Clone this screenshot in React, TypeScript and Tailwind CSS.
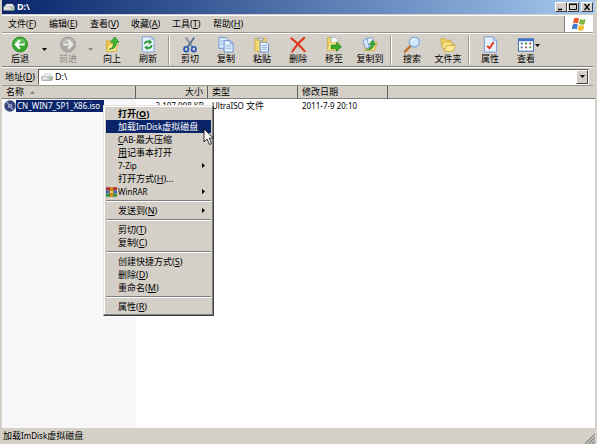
import React from 'react';

type MenuEntry = {
  label: string;
  hotkey?: string;
  suffix?: string;
  bold?: boolean;
  active?: boolean;
  submenu?: boolean;
  underlineFirst?: boolean;
  icon?: React.ReactNode;
};

const menus = [
  { label: '文件', hotkey: 'F' },
  { label: '编辑', hotkey: 'E' },
  { label: '查看', hotkey: 'V' },
  { label: '收藏', hotkey: 'A' },
  { label: '工具', hotkey: 'T' },
  { label: '帮助', hotkey: 'H' },
];

function Hotkey({ letter }: { letter: string }) {
  return (
    <>
      (<u>{letter}</u>)
    </>
  );
}

// Latin runs are set one size smaller than the Chinese around them
function Mixed({ text }: { text: string }) {
  return (
    <>
      {text.split(/([\x20-\x7e]+)/).map((part, i) =>
        i % 2 ? (
          <span key={i} className="text-[8px]">
            {part}
          </span>
        ) : (
          part
        )
      )}
    </>
  );
}

function Svg({ children }: { children: React.ReactNode }) {
  return (
    <svg className="w-[18px] h-[18px]" viewBox="0 0 18 18" fill="none" aria-hidden="true">
      {children}
    </svg>
  );
}

function DriveIcon() {
  return (
    <svg className="w-3 h-2 shrink-0" viewBox="0 0 12 8" aria-hidden="true">
      <path d="M1 4 3.500 1h6L11.500 4z" fill="#f4f4f2" stroke="#a5a5a0" strokeWidth=".5" />
      <path d="M.5 4h11v2.500q0 1-1 1h-9q-1 0-1-1z" fill="#d2d3d0" stroke="#8d8d88" strokeWidth=".6" />
      <path d="M1.500 5h5" stroke="#fff" />
      <path d="M8.500 6h2" stroke="#3fae3a" />
    </svg>
  );
}

function DiscIcon() {
  return (
    <svg className="w-3 h-3 shrink-0" viewBox="0 0 12 12" aria-hidden="true">
      <circle cx="6" cy="6" r="5.700" fill="#39437c" />
      <path d="M6 6 1.500 2.500a5.600 5.600 0 0 1 2-1.500zM6 6l4.500 3.500a5.600 5.600 0 0 1-2 1.500z" fill="#7d88ba" />
      <circle cx="6" cy="6" r="2" fill="#b9c1e2" />
      <circle cx="6" cy="6" r=".8" fill="#27305f" />
    </svg>
  );
}

function RarIcon() {
  return (
    <svg className="w-[11px] h-2.5" viewBox="0 0 11 10" aria-hidden="true">
      <rect width="11" height="3" y=".2" fill="#b3312d" />
      <rect width="11" height="3" y="3.500" fill="#3862ae" />
      <rect width="11" height="3" y="6.800" fill="#3b9440" />
      <rect x="4" width="3" height="10" fill="#d98a25" />
      <rect x="3.500" y="3.500" width="4" height="3" fill="#f7d873" stroke="#8a5a12" strokeWidth=".6" />
    </svg>
  );
}

function RoundArrow({ back }: { back?: boolean }) {
  return (
    <Svg>
      <circle cx="9" cy="9" r="8" fill={back ? '#35a82c' : '#a9a8a4'} stroke={back ? '#24831f' : '#989793'} strokeWidth=".8" />
      <path d="M2.500 8a6.600 6.600 0 0 1 13 0q-6-3-13 0z" fill="#fff" opacity=".25" />
      {back ? (
        <path d="M14 9H5M9 4.500 4.500 9 9 13.500" stroke="#fff" strokeWidth="2.300" />
      ) : (
        <path d="M4 9h9M9 4.500 13.500 9 9 13.500" stroke="#eeece8" strokeWidth="2.300" />
      )}
    </Svg>
  );
}

function UpIcon() {
  return (
    <Svg>
      <path d="M3 5h4l1.500 1.500H13V16L3 16.500z" fill="#eec94c" stroke="#c79c28" strokeWidth=".7" />
      <path d="M3 16.500 6 8.500h9.500L13 16z" fill="#fbe68d" stroke="#d0a835" strokeWidth=".6" />
      <path d="M6 14q5-1 4.500-7.500H7.500L12 1l4.500 5.500h-2.800Q14 14 6 14z" fill="#3fb636" stroke="#217c1d" strokeWidth=".7" />
    </Svg>
  );
}

function RefreshIcon() {
  return (
    <Svg>
      <path d="M3 1h10l2.500 2.500V17H3z" fill="#e9f2fd" stroke="#6e9ad6" strokeWidth=".9" />
      <path d="M13 1v2.500h2.500" stroke="#6e9ad6" strokeWidth=".7" />
      <path d="M5.500 8.500Q6.500 5 10.500 6M13 9.500Q12 13.500 8 12.500" stroke="#2b9e34" strokeWidth="1.900" />
      <path d="M10 3.500 13.500 6.500 9.500 9zM8.500 10 5 12l3.500 3z" fill="#2b9e34" />
    </Svg>
  );
}

function CutIcon() {
  return (
    <Svg>
      <path d="M4.500 1.500 11.500 11.500" stroke="#7d8ea8" strokeWidth="1.900" />
      <path d="M13.500 1.500 6.500 11.500" stroke="#5c7090" strokeWidth="1.900" />
      <ellipse cx="5" cy="14" rx="2.300" ry="2.600" stroke="#2857b3" strokeWidth="1.800" />
      <ellipse cx="13" cy="14" rx="2.300" ry="2.600" stroke="#2857b3" strokeWidth="1.800" />
    </Svg>
  );
}

function CopyIcon() {
  return (
    <Svg>
      <path d="M1.500 1.500h7L11 4v9H1.500z" fill="#dce9fb" stroke="#5d8fd6" strokeWidth=".9" />
      <path d="M3 5h5M3 7h3M3 9h3" stroke="#8bb0e4" strokeWidth=".8" />
      <path d="M7 5h6.500L16.500 8v9H7z" fill="#eef5fe" stroke="#4b80cc" strokeWidth=".9" />
      <path d="M13.500 5v3h3" stroke="#4b80cc" strokeWidth=".7" />
      <path d="M8.500 9.500H15M8.500 11.500H15M8.500 13.500H15" stroke="#7ba4df" strokeWidth=".8" />
    </Svg>
  );
}

function PasteIcon() {
  return (
    <Svg>
      <rect x="1.500" y="2.500" width="12" height="14" rx="1" fill="#f3d971" stroke="#c9a23c" strokeWidth=".8" />
      <path d="M4.500 4.500V2.500h1.500Q7.500-.5 9 2.500h1.500v2z" fill="#d7d9dc" stroke="#84888f" strokeWidth=".7" />
      <path d="M7 6.500h6l3 3V17H7z" fill="#eef5fe" stroke="#4b80cc" strokeWidth=".9" />
      <path d="M8.500 10H14M8.500 12H14.500M8.500 14H14.500" stroke="#7ba4df" strokeWidth=".9" />
    </Svg>
  );
}

function DeleteIcon() {
  return (
    <Svg>
      <path d="M2 2.500Q8 7 16 16M15.500 2Q8 8 3 16.500" stroke="#e0361c" strokeWidth="2.200" strokeLinecap="round" />
    </Svg>
  );
}

function MoveIcon() {
  return (
    <Svg>
      <path d="M2 4V2h4.500L8 4h5v11H2z" fill="#f3d465" stroke="#c59d30" strokeWidth=".7" />
      <path d="M6 1.500h5l2 2V10H6z" fill="#f1f6fd" stroke="#87a9d8" strokeWidth=".6" />
      <path d="M2 15 4 7h11l-2 8z" fill="#fbe78f" stroke="#cda838" strokeWidth=".6" />
      <path d="M6 9.500h5.500V6.500L17 11.500l-5.500 5v-3H6z" fill="#36aa2d" stroke="#1e7a1b" strokeWidth=".7" />
    </Svg>
  );
}

function CopyToIcon() {
  return (
    <Svg>
      <path d="M4 6h12.500L14 15.500H3z" fill="#f7dc74" stroke="#c9a236" strokeWidth=".7" />
      <path d="M1.500 5 7 2l3 9-5.500 2.500z" fill="#d6e6fb" stroke="#5f90d2" strokeWidth=".8" />
      <path d="M6 3 11.500 1.500 14 9.500 8 12z" fill="#edf4fe" stroke="#5f90d2" strokeWidth=".8" />
      <path d="M5 14q5 0 5-5H8l3.500-4.500L15 9h-2q-1 7-8 5z" fill="#36a840" stroke="#1e7a2b" strokeWidth=".6" />
    </Svg>
  );
}

function SearchIcon() {
  return (
    <Svg>
      <path d="M7.500 10.500 1.500 16.500" stroke="#c4732f" strokeWidth="2.600" strokeLinecap="round" />
      <circle cx="11.500" cy="6.500" r="5.300" fill="#cfe7fb" stroke="#7fa6d4" strokeWidth="1.200" />
      <path d="M8.500 5.500q1-2.500 3.500-2.500" stroke="#fff" strokeWidth="1.400" />
    </Svg>
  );
}

function FoldersIcon() {
  return (
    <Svg>
      <path d="M1.500 4V3h4.500l1.500 1.500H12V12L3 13z" fill="#f2d160" stroke="#c39b2e" strokeWidth=".7" />
      <path d="M5 7h4L10.500 8.500H15V16H5z" fill="#edc850" stroke="#c39b2e" strokeWidth=".7" />
      <path d="M3 13 4 6.500h9l-1 6.500z" fill="#fae587" stroke="#cba636" strokeWidth=".5" />
      <path d="M5 16.300 7.500 10h9.500l-2.500 6.300z" fill="#fbe996" stroke="#c9a236" strokeWidth=".7" />
    </Svg>
  );
}

function PropertiesIcon() {
  return (
    <Svg>
      <path d="M3 1h9.500L16 4.500V17H3z" fill="#e7f1fd" stroke="#6a95d4" strokeWidth=".9" />
      <path d="M12.500 1v3.500H16" fill="#bcd5f5" stroke="#6a95d4" strokeWidth=".7" />
      <path d="M6 10.500 8.500 13 13 6.500" stroke="#e0391f" strokeWidth="2" />
    </Svg>
  );
}

function ViewIcon() {
  return (
    <Svg>
      <rect x="1" y="3" width="16" height="13" fill="#fff" stroke="#3567b8" />
      <rect x="1" y="3" width="16" height="2.500" fill="#3a72cc" />
      <path d="M3.500 8h2M3.500 12h2" stroke="#3f6fc0" strokeWidth="2" />
      <path d="M8 8h2M12.500 12h2" stroke="#3d9a45" strokeWidth="2" />
      <path d="M12.500 8h2M8 12h2" stroke="#a8486c" strokeWidth="2" />
    </Svg>
  );
}

function WindowsFlag() {
  return (
    <svg className="w-4 h-3.5" viewBox="0 0 16 14" aria-hidden="true">
      <path d="M3 1.500Q5.500 0 8 1.500L7 6.500Q4.500 5 2 6.500z" fill="#e8592b" />
      <path d="M9 2q2.500 1.500 5.500 0l-1 5Q11 8.500 8 7z" fill="#7cb53a" />
      <path d="M1.800 7.500Q4.300 6 6.800 7.500l-1 5Q3.300 11 .8 12.500z" fill="#3d7bd0" />
      <path d="M7.800 8q2.700 1.500 5.500 0l-1 5q-2.800 1.500-5.500 0z" fill="#f3bb2e" />
    </svg>
  );
}

function Caret({ className = 'text-black' }: { className?: string }) {
  return (
    <svg className={`w-[5px] h-[3px] ${className}`} viewBox="0 0 5 3" aria-hidden="true">
      <path d="M0 0h5L2.500 3z" fill="currentColor" />
    </svg>
  );
}

function ToolButton({ label, icon, disabled, caret }: { label: string; icon: React.ReactNode; disabled?: boolean; caret?: boolean }) {
  return (
    <button
      disabled={disabled}
      className={`relative w-9 shrink-0 flex flex-col items-center whitespace-nowrap ${disabled ? 'text-[#8d8a84]' : ''}`}
    >
      {icon}
      <span className="leading-3">{label}</span>
      {caret && (
        <span className="absolute right-1 top-2 flex">
          <Caret />
        </span>
      )}
    </button>
  );
}

function ToolSeparator() {
  return (
    <div className="w-1.5 shrink-0 flex justify-center">
      <div className="w-0.5 border-l border-[#9b978f] border-r border-r-white" />
    </div>
  );
}

function CaptionButton({ label, children }: { label: string; children: React.ReactNode }) {
  return (
    <button
      aria-label={label}
      className="w-3 h-2.5 bg-[#d4d0c8] border border-t-white border-l-white border-r-[#404040] border-b-[#404040] flex items-center justify-center"
    >
      <svg className="w-2 h-2" viewBox="0 0 8 8" fill="none" stroke="#000" aria-hidden="true">
        {children}
      </svg>
    </button>
  );
}

function TitleBar() {
  return (
    <header className="h-3.5 shrink-0 flex items-center pl-px pr-0.5 bg-linear-to-r from-[#0a246a] to-[#a6caf0] text-white">
      <DriveIcon />
      <h1 className="flex-1 pl-0.5 font-bold">D:\</h1>
      <CaptionButton label="最小化">
        <path d="M1 6.500h4" strokeWidth="1.500" />
      </CaptionButton>
      <CaptionButton label="最大化">
        <path d="M.5 1.500h7v5h-7z" />
        <path d="M0 1h8" />
      </CaptionButton>
      <div className="w-0.5" />
      <CaptionButton label="关闭">
        <path d="m1.500 1 5 6M6.500 1l-5 6" strokeWidth="1.300" />
      </CaptionButton>
    </header>
  );
}

function MenuBar() {
  return (
    <nav className="h-[18px] mt-px mr-0.5 shrink-0 flex border-t border-t-white border-b border-b-[#9b978f] pl-1.5">
      {menus.map((m) => (
        <button key={m.label} className="w-[41px] text-left whitespace-nowrap">
          {m.label}
          <Hotkey letter={m.hotkey} />
        </button>
      ))}
      <div className="ml-auto w-[29px] bg-white border-l border-[#808080] flex items-center justify-center">
        <WindowsFlag />
      </div>
    </nav>
  );
}

function ToolBar() {
  return (
    <div className="h-[34px] mr-0.5 shrink-0 flex border-t border-t-white border-b border-b-[#808080] pt-0.5 pb-px">
      <ToolButton label="后退" icon={<RoundArrow back />} />
      <button aria-label="后退记录" className="w-3 shrink-0 flex justify-center pt-3">
        <Caret />
      </button>
      <ToolButton label="前进" icon={<RoundArrow />} disabled />
      <button aria-label="前进记录" className="w-2 shrink-0 flex justify-center pt-3" disabled>
        <Caret className="text-[#8d8a84]" />
      </button>
      <ToolButton label="向上" icon={<UpIcon />} />
      <ToolButton label="刷新" icon={<RefreshIcon />} />
      <ToolSeparator />
      <ToolButton label="剪切" icon={<CutIcon />} />
      <ToolButton label="复制" icon={<CopyIcon />} />
      <ToolButton label="粘贴" icon={<PasteIcon />} />
      <ToolButton label="删除" icon={<DeleteIcon />} />
      <ToolButton label="移至" icon={<MoveIcon />} />
      <ToolButton label="复制到" icon={<CopyToIcon />} />
      <ToolSeparator />
      <ToolButton label="搜索" icon={<SearchIcon />} />
      <ToolButton label="文件夹" icon={<FoldersIcon />} />
      <ToolSeparator />
      <ToolButton label="属性" icon={<PropertiesIcon />} />
      <ToolButton label="查看" icon={<ViewIcon />} caret />
    </div>
  );
}

function AddressBar() {
  return (
    <div className="h-[19px] mr-0.5 shrink-0 flex items-center border-t border-t-white border-b border-b-[#9b978f] pl-[3px] pr-1">
      <label htmlFor="address" className="w-[33px] whitespace-nowrap">
        地址
        <Hotkey letter="D" />
      </label>
      <div className="flex-1 h-4 flex items-center bg-white border border-t-[#606060] border-l-[#606060] border-r-white border-b-white pl-0.5">
        <DriveIcon />
        <input id="address" defaultValue="D:\" className="flex-1 min-w-0 pl-0.5 outline-none" />
        <button
          aria-label="展开地址列表"
          className="w-3 h-full bg-[#d4d0c8] border border-t-white border-l-white border-r-[#404040] border-b-[#404040] flex items-center justify-center"
        >
          <Caret />
        </button>
      </div>
    </div>
  );
}

const thClass = 'h-3 p-0 px-1 font-normal bg-[#d4d0c8] border-r border-[#606060] border-b border-b-[#808080]';

function FileList() {
  return (
    <main className="flex-1 min-h-0 bg-white">
      <table className="w-full h-full table-fixed border-separate border-spacing-0">
        <colgroup>
          <col className="w-[134px]" />
          <col className="w-[72px]" />
          <col className="w-[90px]" />
          <col className="w-[90px]" />
          <col />
        </colgroup>
        <thead>
          <tr>
            <th className={`${thClass} text-left`}>
              <div className="flex items-center gap-1.5">
                名称
                <svg className="w-[5px] h-[3px]" viewBox="0 0 5 3" aria-hidden="true">
                  <path d="M0 3h5L2.500 0z" fill="#87837b" />
                </svg>
              </div>
            </th>
            <th className={`${thClass} text-right`}>大小</th>
            <th className={`${thClass} text-left`}>类型</th>
            <th className={`${thClass} text-left`}>修改日期</th>
            <td className="p-0 bg-[#d4d0c8] border-b border-[#808080]" />
          </tr>
        </thead>
        <tbody>
          <tr className="h-3.5">
            <td className="p-0 bg-[#f7f7f7]">
              <div className="flex items-center pl-0.5">
                <DiscIcon />
                <span className="bg-[#0a246a] text-white text-[8px] leading-3 pl-px pr-1">CN_WIN7_SP1_X86.iso</span>
              </div>
            </td>
            <td className="p-0 pr-1 text-right text-[8px] whitespace-nowrap">3,107,008 KB</td>
            <td className="p-0 pl-1 whitespace-nowrap">
              <Mixed text="UltraISO 文件" />
            </td>
            <td className="p-0 pl-1 text-[8px] whitespace-nowrap">2011-7-9 20:10</td>
            <td />
          </tr>
          <tr>
            <td className="bg-[#f7f7f7]" />
            <td colSpan={4} />
          </tr>
        </tbody>
      </table>
    </main>
  );
}

const contextGroups: MenuEntry[][] = [
  [
    { label: '打开', hotkey: 'O', bold: true },
    { label: '加载ImDisk虚拟磁盘', active: true },
    { label: 'CAB-最大压缩', underlineFirst: true },
    { label: '用记事本打开', underlineFirst: true },
    { label: '7-Zip', submenu: true },
    { label: '打开方式', hotkey: 'H', suffix: '...' },
    { label: 'WinRAR', submenu: true, icon: <RarIcon /> },
  ],
  [{ label: '发送到', hotkey: 'N', submenu: true }],
  [
    { label: '剪切', hotkey: 'T' },
    { label: '复制', hotkey: 'C' },
  ],
  [
    { label: '创建快捷方式', hotkey: 'S' },
    { label: '删除', hotkey: 'D' },
    { label: '重命名', hotkey: 'M' },
  ],
  [{ label: '属性', hotkey: 'R' }],
];

function ContextItem({ item }: { item: MenuEntry }) {
  return (
    <button
      role="menuitem"
      className={`w-full h-[13px] flex items-center pr-1.5 whitespace-nowrap ${item.bold ? 'font-bold' : ''} ${item.active ? 'bg-[#0a246a] text-white' : ''}`}
    >
      <span className="w-3 shrink-0">{item.icon}</span>
      <span className="flex-1 text-left">
        {item.underlineFirst ? (
          <>
            <u>
              <Mixed text={item.label[0]} />
            </u>
            <Mixed text={item.label.slice(1)} />
          </>
        ) : (
          <Mixed text={item.label} />
        )}
        {item.hotkey && <Hotkey letter={item.hotkey} />}
        {item.suffix}
      </span>
      {item.submenu && (
        <svg className="w-[3px] h-[5px]" viewBox="0 0 3 5" aria-hidden="true">
          <path d="M0 0v5l3-2.500z" fill="#000" />
        </svg>
      )}
    </button>
  );
}

function ContextMenu() {
  return (
    <div
      role="menu"
      className="absolute left-[101px] top-[105px] w-[111px] bg-[#d4d0c8] border border-t-[#e6e3dd] border-l-[#e6e3dd] border-r-[#404040] border-b-[#404040] shadow-[inset_-1px_-1px_0_#808080,inset_1px_1px_0_#fff] px-0.5 pt-px pb-0.5"
    >
      {contextGroups.map((group, i) => (
        <React.Fragment key={i}>
          {i > 0 && (
            <div className="h-1.5 flex flex-col justify-center">
              <div className="border-t border-t-[#808080] border-b border-b-white" />
            </div>
          )}
          {group.map((item) => (
            <ContextItem key={item.label} item={item} />
          ))}
        </React.Fragment>
      ))}
    </div>
  );
}

function Pointer() {
  return (
    <svg className="absolute left-[201px] top-[128px] w-3 h-[18px] pointer-events-none" viewBox="0 0 12 18" aria-hidden="true">
      <path d="M1 1v13l3-3 2.500 5.500 2-1L6.200 10.200h4.300z" fill="#fff" stroke="#000" strokeWidth=".8" />
    </svg>
  );
}

function StatusBar() {
  return (
    <footer className="h-4 shrink-0 flex items-center justify-between pl-px">
      <span>
        <Mixed text="加载ImDisk虚拟磁盘" />
      </span>
      <svg className="w-2.5 h-2.5 self-end" viewBox="0 0 10 10" stroke="#808080" aria-hidden="true">
        <path d="M0 10 10 0M3.500 10 10 3.500M7 10l3-3" strokeWidth="1.200" />
      </svg>
    </footer>
  );
}

export default function App() {
  return (
    <div className="relative h-screen flex flex-col overflow-hidden bg-[#d4d0c8] text-black text-[9px] leading-3 border-x-2 border-[#d4d0c8] font-['Noto_Sans','Noto_Sans_CJK_SC',sans-serif]">
      <TitleBar />
      <MenuBar />
      <ToolBar />
      <AddressBar />
      <FileList />
      <StatusBar />
      <ContextMenu />
      <Pointer />
    </div>
  );
}
